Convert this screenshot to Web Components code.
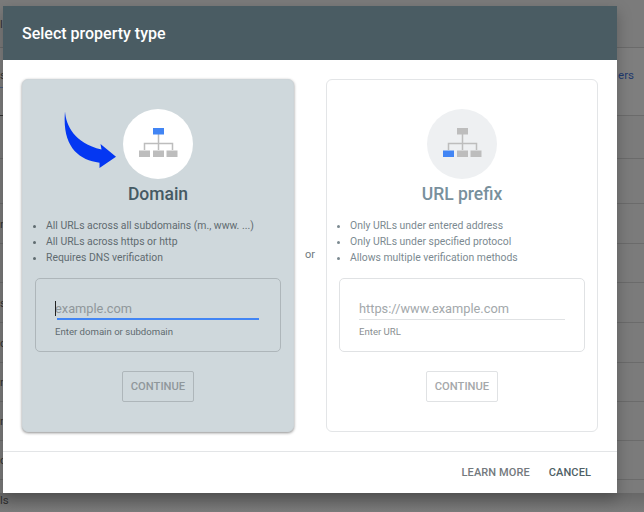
<!DOCTYPE html>
<html>
<head>
<meta charset="utf-8">
<title>Select property type</title>
<style>
html, body { margin: 0; height: 100%; }
body { font-family: Roboto, "Liberation Sans", sans-serif; overflow: hidden; }
</style>
</head>
<body>
<page-backdrop></page-backdrop>
<property-dialog heading="Select property type">
    <property-card slot="left" active name="Domain" hilite="top" hint="Enter domain or subdomain" placeholder="example.com">
        <li>All URLs across all subdomains (m., www. ...)</li>
        <li>All URLs across https or http</li>
        <li>Requires DNS verification</li>
    </property-card>
    <property-card slot="right" name="URL prefix" hilite="left" hint="Enter URL" placeholder="https://www.example.com">
        <li>Only URLs under entered address</li>
        <li>Only URLs under specified protocol</li>
        <li>Allows multiple verification methods</li>
    </property-card>
</property-dialog>

<script>
class PageBackdrop extends HTMLElement {
    constructor() {
        super();
        this.attachShadow({ mode: "open" });
        // the table behind the dialog: height, left text (mostly under the dialog), right text
        const rows = [
            [48, "l", ""], [68, "s", "ers"], [43, "", ""], [45, "", ""], [40, "n", ""], [39, "", ""],
            [40, "s", ""], [40, "c", ""], [39, "r", ""], [39, "n", ""], [39, "c", ""], [32, "ls", ""]
        ];
        this.shadowRoot.innerHTML = `
        <style>
        :host {
            display: block; position: absolute; inset: 0; background: #7b7b7b; overflow: hidden;
            font-size: 11.5px; color: #333;
        }
        .row {
            box-sizing: border-box; display: flex; align-items: center; justify-content: space-between;
            border-bottom: 1px solid #6b6b6b; padding-right: 10px;
        }
        .row:nth-of-type(2) { background: #7e7e7e; padding-bottom: 14px; }
        .row:nth-of-type(12) { border: 0; padding-top: 8px; }
        .right { color: #1f3a6e; }
        .shade {
            position: absolute; left: 0; right: 0; top: 493px; height: 19px;
            background: linear-gradient(rgba(0,0,0,.16), rgba(0,0,0,0));
        }
        .blue { position: absolute; left: 0; width: 3px; top: 87px; height: 1px; background: #4a5f80; }
        .dark { position: absolute; left: 0; width: 3px; top: 115px; height: 1px; background: #333; }
        </style>
        ${rows.map(r => `<div class="row" style="height:${r[0]}px"><span class="left">${r[1]}</span><span class="right">${r[2]}</span></div>`).join("")}
        <div class="shade"></div>
        <div class="blue"></div>
        <div class="dark"></div>
        `;
    }
}

class NetIcon extends HTMLElement {
    constructor() {
        super();
        this.attachShadow({ mode: "open" });
    }

    connectedCallback() {
        const hilite = this.getAttribute("hilite");
        const c = which => hilite === which ? "#4285f4" : "#bdbdbd";
        this.shadowRoot.innerHTML = `
        <style>
        :host { display: block; width: 70px; height: 70px; border-radius: 50%; background: var(--circle, #fff); }
        svg { display: block; }
        </style>
        <svg width="70" height="70" viewBox="0 0 70 70">
            <path d="M35.5 25v16M21.5 41v-6.500h28V41" fill="none" stroke="#bdbdbd" stroke-width="1.500"/>
            <rect x="30" y="19" width="11" height="6.500" fill="${c("top")}"/>
            <rect x="16" y="41.500" width="11" height="6.500" fill="${c("left")}"/>
            <rect x="30" y="41.500" width="11" height="6.500" fill="#bdbdbd"/>
            <rect x="43.500" y="41.500" width="11" height="6.500" fill="#bdbdbd"/>
        </svg>`;
    }
}

class PropertyCard extends HTMLElement {
    constructor() {
        super();
        this.attachShadow({ mode: "open" });
    }

    connectedCallback() {
        const active = this.hasAttribute("active");
        this.shadowRoot.innerHTML = `
        <style>
        :host {
            display: flex; flex-direction: column; align-items: center; position: relative;
            box-sizing: border-box; width: 272px; height: 353px; padding: 29px 12px 0;
            border-radius: 6px; border: 1px solid #e3e5e7; background: #fff;
            --circle: #eef0f2; color: #7c8a91;
        }
        :host([active]) {
            background: #cfd8dc; border-color: #cdd5d9; color: #5f6b70; --circle: #fff;
            box-shadow: 0 1px 3px rgba(0,0,0,.45);
        }
        h2 { margin: 5px 0 0; font-size: 17.500px; line-height: 21px; font-weight: 500; color: #78909c; }
        :host([active]) h2 { color: #455a64; }
        ul { align-self: stretch; margin: 13px 0 0; padding: 0 0 0 11px; font-size: 10.400px; line-height: 16px; }
        .field {
            box-sizing: border-box; align-self: stretch; height: 74px; margin-top: 12px; padding: 20px 19px 0;
            border: 1px solid #e0e2e4; border-radius: 5px;
        }
        :host([active]) .field { border-color: #aeb6ba; }
        .ph { font-size: 12.800px; line-height: 19px; color: #a3a8ab; position: relative; }
        :host([active]) .ph { color: #8f979b; }
        :host([active]) .ph::before { content: ""; position: absolute; left: 0; top: 2px; width: 1px; height: 15px; background: #222; }
        .line { height: 1px; margin-top: 1px; background: #e0e2e4; }
        :host([active]) .line { height: 2px; margin: 0 2px; background: #4285f4; }
        .hint { margin-top: 6px; font-size: 9.600px; line-height: 12px; color: #8a8f92; }
        :host([active]) .hint { color: #5f6b70; }
        .go {
            box-sizing: border-box; width: 72px; height: 31px; margin-top: 19px;
            border: 1px solid #e0e2e4; border-radius: 2px;
            display: flex; align-items: center; justify-content: center;
            font-size: 11.200px; font-weight: 500; color: #a5a8aa;
        }
        :host([active]) .go { border-color: #aeb6ba; color: #8f979b; }
        svg.arrow { position: absolute; left: 41px; top: 31px; }
        </style>
        <net-icon hilite="${this.getAttribute("hilite")}"></net-icon>
        <h2>${this.getAttribute("name")}</h2>
        <ul><slot></slot></ul>
        <div class="field">
            <div class="ph">${this.getAttribute("placeholder")}</div>
            <div class="line"></div>
            <div class="hint">${this.getAttribute("hint")}</div>
        </div>
        <div class="go">CONTINUE</div>
        ${active ? `<svg class="arrow" width="54" height="60" viewBox="64 111 54 60">
            <path d="M65 111.500C66 125 74 143 101.500 149.500L100.500 144L116 156.700L99.500 168L99.500 162.700C78 160 62 146 65 111.500Z" fill="#0437f2"/>
        </svg>` : ""}`;
    }
}

class PropertyDialog extends HTMLElement {
    constructor() {
        super();
        this.attachShadow({ mode: "open" });
    }

    connectedCallback() {
        this.shadowRoot.innerHTML = `
        <style>
        :host {
            display: flex; flex-direction: column; position: absolute; left: 3px; top: 6px;
            width: 614px; height: 487px; background: #fff;
            box-shadow: 0 6px 14px rgba(0,0,0,.25);
        }
        header {
            box-sizing: border-box; height: 54px; flex: none; display: flex; align-items: center; padding: 1px 0 0 19px;
            background: #4a5c63; color: #fff; font-size: 16px; font-weight: 500;
        }
        .body { flex: 1; display: flex; align-items: flex-start; padding: 19px 19px 0; }
        .or { width: 32px; text-align: center; margin-top: 169px; font-size: 11px; color: #6f7a80; }
        footer {
            box-sizing: border-box; height: 42px; flex: none; display: flex; align-items: center; justify-content: flex-end;
            gap: 19px; padding: 0 26px 1px 0; border-top: 1px solid #e3e5e7;
            font-size: 11px; font-weight: 500; letter-spacing: .1px;
        }
        .more { color: #73797d; }
        .cancel { color: #4f5f66; }
        </style>
        <header>${this.getAttribute("heading")}</header>
        <div class="body">
            <slot name="left"></slot>
            <div class="or">or</div>
            <slot name="right"></slot>
        </div>
        <footer><span class="more">LEARN MORE</span><span class="cancel">CANCEL</span></footer>`;
    }
}

customElements.define("page-backdrop", PageBackdrop);
customElements.define("net-icon", NetIcon);
customElements.define("property-card", PropertyCard);
customElements.define("property-dialog", PropertyDialog);
</script>
</body>
</html>
